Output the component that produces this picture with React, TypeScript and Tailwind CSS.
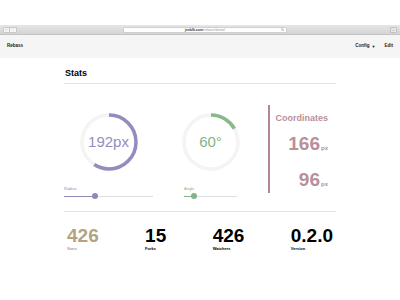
import React from "react";

const FONT = { fontFamily: '"Liberation Sans", Arial, sans-serif' };

function Ring({ value, color, fraction, text }: { value: string; color: string; fraction: number; text: string }) {
  const r = 27;
  const c = 2 * Math.PI * r;
  return (
    <div className="relative w-[60px] h-[60px] mx-auto">
      <svg width="60" height="60" viewBox="0 0 60 60" className="absolute inset-0">
        <circle cx="30" cy="30" r={r} fill="none" stroke="#f4f4f4" strokeWidth="3.5" />
        <circle
          cx="30"
          cy="30"
          r={r}
          fill="none"
          stroke={color}
          strokeWidth="3.5"
          strokeDasharray={`${c * fraction} ${c}`}
          transform="rotate(-90 30 30)"
        />
      </svg>
      <div className={`absolute inset-0 flex items-center justify-center text-[15px] ${text}`}>{value}</div>
    </div>
  );
}

function Slider({ label, filled, color, text }: { label: string; filled: number; color: string; text: string }) {
  return (
    <div>
      <div className={`text-[4px] leading-[5px] ${text}`}>{label}</div>
      <div className="relative h-[6px] mt-[2px] flex items-center">
        <div className="h-px w-full bg-[#dedede]" />
        <div className={`absolute left-0 h-px ${color}`} style={{ width: filled }} />
        <div className={`absolute w-[6px] h-[6px] rounded-full ${color}`} style={{ left: filled - 3 }} />
      </div>
    </div>
  );
}

const STATS = [
  { v: "426", l: "Stars", c: "text-[#b3a47f]" },
  { v: "15", l: "Forks", c: "text-black" },
  { v: "426", l: "Watchers", c: "text-black" },
  { v: "0.2.0", l: "Version", c: "text-black" },
];

export default function App() {
  return (
    <div className="w-[400px] h-[300px] bg-white overflow-hidden text-black" style={FONT}>
      <div className="h-[25px]" />
      {/* browser toolbar */}
      <div className="h-[10px] bg-gradient-to-b from-[#e6e6e6] to-[#d4d4d4] border-b border-[#c4c4c4] flex items-center px-[3px]">
        <div className="flex">
          <div className="w-[7px] h-[6px] bg-[#f4f4f4] border border-[#c8c8c8] rounded-l-[1px] text-[4px] leading-[4px] text-[#999] flex items-center justify-center">‹</div>
          <div className="w-[7px] h-[6px] bg-[#f4f4f4] border border-l-0 border-[#c8c8c8] rounded-r-[1px] text-[4px] leading-[4px] text-[#bbb] flex items-center justify-center">›</div>
        </div>
        <div className="ml-[106px] w-[164px] h-[6px] bg-white rounded-[1px] border border-[#d0d0d0] relative flex items-center justify-center text-[3.5px] leading-[4px]">
          <span className="font-bold text-[#333]">jxnblk.com</span>
          <span className="text-[#999]">/rebass/demo/</span>
          <span className="absolute right-[2px] text-[4px] text-[#888]">↻</span>
        </div>
        <div className="ml-auto w-[7px] h-[6px] bg-[#e8e8e8] border border-[#c0c0c0] rounded-[1px] text-[4px] leading-[4px] text-[#999] flex items-center justify-center">+</div>
      </div>
      {/* nav */}
      <div className="h-[23px] bg-[#f5f5f5] flex items-center px-[7px] text-[4.5px] font-bold text-[#222]">
        <span>Rebass</span>
        <span className="ml-auto">Config</span>
        <span className="ml-[2px] text-[4px]">▼</span>
        <span className="ml-[9px]">Edit</span>
      </div>

      <div className="w-[272px] mx-auto">
        <h2 className="mt-[10px] ml-px text-[9px] leading-[10px] font-bold">Stats</h2>
        <div className="mt-[5px] h-px bg-[#e4e4e4]" />

        <div className="flex mt-[21px]">
          <div className="w-[89px]">
            <div className="mt-[7px]">
              <Ring value="192px" color="#938dbf" fraction={0.59} text="text-[#938dbf]" />
            </div>
            <div className="mt-[14px]">
              <Slider label="Radius" filled={31} color="bg-[#8f89b9]" text="text-[#8f89b9]" />
            </div>
          </div>
          <div className="w-[53px] ml-[31px]">
            <div className="mt-[7px] -mx-[4px]">
              <Ring value="60°" color="#8ab88b" fraction={1 / 6} text="text-[#86b287]" />
            </div>
            <div className="mt-[14px]">
              <Slider label="Angle" filled={10} color="bg-[#86b287]" text="text-[#86b287]" />
            </div>
          </div>
          <div className="ml-[31px] w-[68px] h-[88px] border-l-2 border-[#b58793] text-[#b8909a] text-right pr-[8px]">
            <div className="mt-[8px] text-[9px] leading-[10px] font-bold">Coordinates</div>
            <div className="mt-[12px] text-[19px] leading-[18px] font-bold">
              166<span className="ml-px text-[6px]">px</span>
            </div>
            <div className="mt-[14px] text-[19px] leading-[18px] font-bold">
              96<span className="ml-px text-[6px]">px</span>
            </div>
          </div>
        </div>

        <div className="mt-[12px] h-px bg-[#e4e4e4]" />

        <div className="flex justify-between px-[3px] mt-[14px]">
          {STATS.map((s) => (
            <div key={s.l}>
              <div className={`text-[19px] leading-[19px] font-bold ${s.c}`}>{s.v}</div>
              <div className={`text-[4px] leading-[5px] font-bold mt-px ${s.c}`}>{s.l}</div>
            </div>
          ))}
        </div>
      </div>
    </div>
  );
}
